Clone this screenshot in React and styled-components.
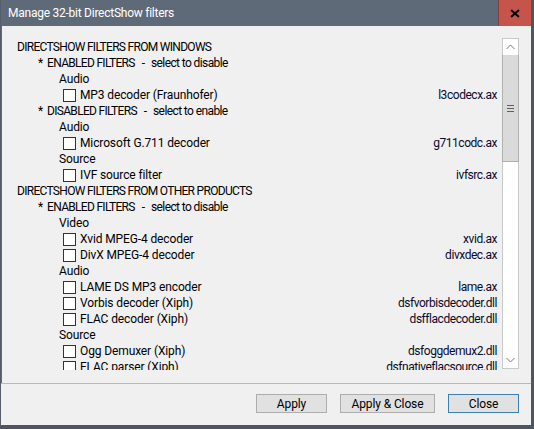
import React from "react";
import styled, { createGlobalStyle } from "styled-components";

const Global = createGlobalStyle`
  html, body {
    margin: 0;
    padding: 0;
    background: #5b6472;
  }
  * {
    box-sizing: border-box;
  }
`;

const UI_FONT = `Roboto, "Liberation Sans", sans-serif`;

const Window = styled.div`
  width: 534px;
  height: 429px;
  display: flex;
  flex-direction: column;
  background: #f0f0f0;
  border-left: 1px solid #545d69;
  border-right: 3px solid #4e5662;
  border-bottom: 4px solid #4e5662;
  font-family: ${UI_FONT};
  font-size: 12px;
  letter-spacing: -0.12px;
  color: #000;
  overflow: hidden;
`;

const TitleBar = styled.div`
  height: 26px;
  flex: none;
  display: flex;
  align-items: center;
  background: #5f6a79;
  color: #fff;
  padding-left: 7px;
`;

const Title = styled.div`
  flex: 1;
  font-size: 12px;
  letter-spacing: -0.25px;
  padding-bottom: 1px;
`;

const CloseBox = styled.div`
  width: 33px;
  height: 26px;
  display: flex;
  align-items: center;
  justify-content: center;
  background: #c5544b;
  border-left: 1px solid #8a3d38;
`;

const Content = styled.div`
  flex: 1;
  display: flex;
  padding: 12px 12px 0 7px;
  border-left: 1px solid #616b78;
  min-height: 0;
`;

const ListView = styled.div`
  flex: 1;
  height: 332px;
  overflow: hidden;
  padding: 1px 5px 0 8px;
`;

const Row = styled.div`
  height: 16px;
  line-height: 16px;
  display: flex;
  align-items: center;
  white-space: pre;
  padding-left: ${(p) => p.$indent}px;
`;

const Star = styled.span`
  margin-right: 4px;
`;

const Caps = styled.span`
  letter-spacing: -0.7px;
`;

const Dash = styled.span`
  margin: 0 6px 0 7px;
`;

const Hint = styled.span`
  flex: 1;
  letter-spacing: -0.6px;
`;

const Check = styled.span`
  width: 13px;
  height: 13px;
  flex: none;
  background: #fff;
  border: 1px solid #333;
  margin-right: 4px;
`;

const Label = styled.span`
  flex: 1;
`;

const FileName = styled.span`
  color: #0a0a2a;
  letter-spacing: -0.45px;
`;

const ScrollBar = styled.div`
  width: 17px;
  height: 331px;
  flex: none;
  display: flex;
  flex-direction: column;
  background: #fff;
  border: 1px solid #c9c9c9;
`;

const Arrow = styled.div`
  height: 16px;
  flex: none;
  display: flex;
  align-items: center;
  justify-content: center;
  background: #fff;
`;

const Thumb = styled.div`
  height: 107px;
  flex: none;
  background: #dadada;
  border-left: 1px solid #b0b0b0;
  border-right: 1px solid #b0b0b0;
  border-bottom: 1px solid #b0b0b0;
  margin: 0 -1px;
  display: flex;
  align-items: center;
  justify-content: center;
`;

const Track = styled.div`
  flex: 1;
`;

const Footer = styled.div`
  height: 42px;
  flex: none;
  border-top: 1px solid #b9b9b9;
  display: flex;
  justify-content: flex-end;
  align-items: flex-start;
  padding: 10px 12px 0 0;
  gap: 13px;
`;

const Button = styled.div`
  height: 19px;
  width: ${(p) => p.$w}px;
  display: flex;
  align-items: center;
  justify-content: center;
  background: #e1e1e1;
  border: 1px solid ${(p) => (p.$default ? "#3f7db5" : "#adadad")};
  font-size: 12px;
`;

const rows = [
  { kind: "head", text: "DIRECTSHOW FILTERS FROM WINDOWS" },
  { kind: "star", text: "ENABLED FILTERS", hint: "select to disable" },
  { kind: "cat", text: "Audio" },
  { kind: "item", text: "MP3 decoder (Fraunhofer)", file: "l3codecx.ax" },
  { kind: "star", text: "DISABLED FILTERS", hint: "select to enable" },
  { kind: "cat", text: "Audio" },
  { kind: "item", text: "Microsoft G.711 decoder", file: "g711codc.ax" },
  { kind: "cat", text: "Source" },
  { kind: "item", text: "IVF source filter", file: "ivfsrc.ax" },
  { kind: "head", text: "DIRECTSHOW FILTERS FROM OTHER PRODUCTS" },
  { kind: "star", text: "ENABLED FILTERS", hint: "select to disable" },
  { kind: "cat", text: "Video" },
  { kind: "item", text: "Xvid MPEG-4 decoder", file: "xvid.ax" },
  { kind: "item", text: "DivX MPEG-4 decoder", file: "divxdec.ax" },
  { kind: "cat", text: "Audio" },
  { kind: "item", text: "LAME DS MP3 encoder", file: "lame.ax" },
  { kind: "item", text: "Vorbis decoder (Xiph)", file: "dsfvorbisdecoder.dll" },
  { kind: "item", text: "FLAC decoder (Xiph)", file: "dsfflacdecoder.dll" },
  { kind: "cat", text: "Source" },
  { kind: "item", text: "Ogg Demuxer (Xiph)", file: "dsfoggdemux2.dll" },
  { kind: "item", text: "FLAC parser (Xiph)", file: "dsfnativeflacsource.dll" },
];

const indents = { head: 0, star: 21, cat: 42, item: 46 };

const FilterRow = ({ row }) => {
  if (row.kind === "head") {
    return (
      <Row $indent={0}>
        <Caps>{row.text}</Caps>
      </Row>
    );
  }
  if (row.kind === "star") {
    return (
      <Row $indent={indents.star}>
        <Star>*</Star>
        <Caps>{row.text}</Caps>
        <Dash>-</Dash>
        <Hint>{row.hint}</Hint>
      </Row>
    );
  }
  return (
    <Row $indent={indents[row.kind]}>
      {row.kind === "item" && <Check />}
      <Label>{row.text}</Label>
      {row.file && <FileName>{row.file}</FileName>}
    </Row>
  );
};

const Chevron = ({ up }) => (
  <svg width="9" height="6" viewBox="0 0 9 6">
    <path
      d={up ? "M0.5 5 L4.5 1 L8.5 5" : "M0.5 1 L4.5 5 L8.5 1"}
      fill="none"
      stroke="#7a7a7a"
      strokeWidth="1"
    />
  </svg>
);

const Grip = () => (
  <svg width="7" height="7" viewBox="0 0 7 7">
    <rect x="0" y="0" width="7" height="1" fill="#606060" />
    <rect x="0" y="3" width="7" height="1" fill="#606060" />
    <rect x="0" y="6" width="7" height="1" fill="#606060" />
  </svg>
);

const App = () => {
  return (
    <>
      <Global />
      <Window>
        <TitleBar>
          <Title>Manage 32-bit DirectShow filters</Title>
          <CloseBox>
            <svg width="10" height="9" viewBox="0 0 10 9">
              <path d="M1 1 L9 8 M9 1 L1 8" stroke="#000" strokeWidth="2" />
            </svg>
          </CloseBox>
        </TitleBar>
        <Content>
          <ListView>
            {rows.map((row, i) => (
              <FilterRow key={i} row={row} />
            ))}
          </ListView>
          <ScrollBar>
            <Arrow>
              <Chevron up />
            </Arrow>
            <Thumb>
              <Grip />
            </Thumb>
            <Track />
            <Arrow>
              <Chevron />
            </Arrow>
          </ScrollBar>
        </Content>
        <Footer>
          <Button $w={71}>Apply</Button>
          <Button $w={95}>Apply &amp; Close</Button>
          <Button $w={71} $default>
            Close
          </Button>
        </Footer>
      </Window>
    </>
  );
};

export default App;
